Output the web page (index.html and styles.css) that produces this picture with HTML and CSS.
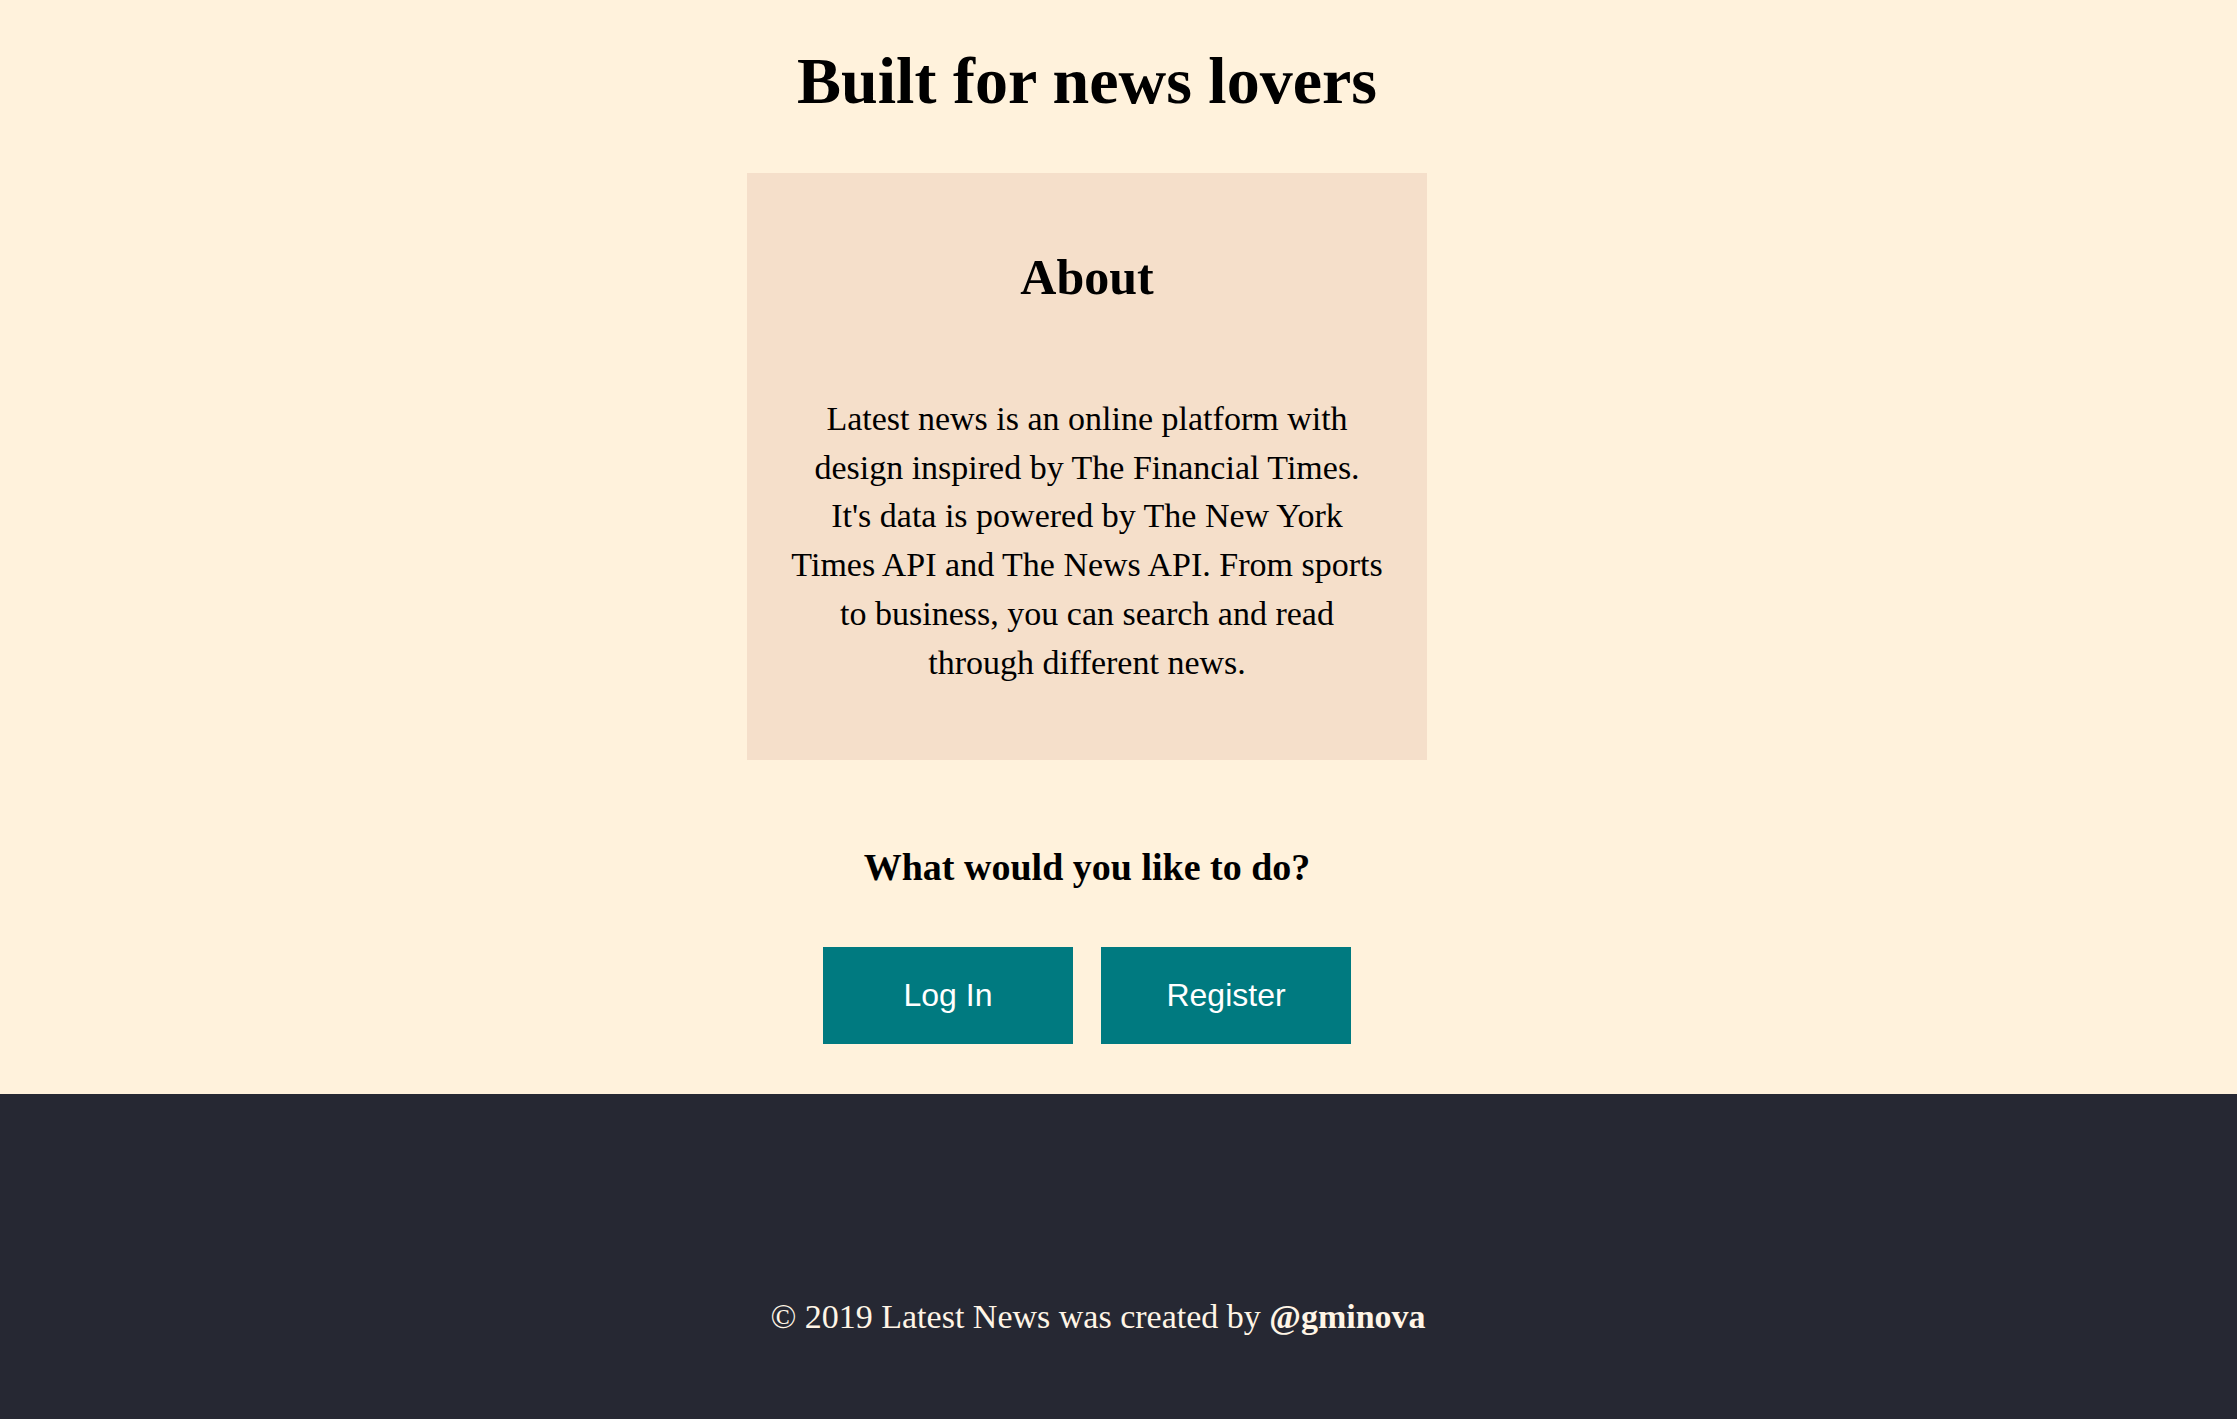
FILE: index.html
```html
<!DOCTYPE html>
<html lang="en">
<head>
<meta charset="utf-8">
<title>Latest News</title>
<link rel="stylesheet" href="styles.css">
</head>
<body>
<main class="hero">
  <h1 class="title">Built for news lovers</h1>
  <section class="about">
    <h2 class="about-title">About</h2>
    <p class="about-text">Latest news is an online platform with<br>design inspired by The Financial Times.<br>It's data is powered by The New York<br>Times API and The News API. From sports<br>to business, you can search and read<br>through different news.</p>
  </section>
  <h3 class="question">What would you like to do?</h3>
  <div class="actions">
    <a class="btn" href="#">Log In</a>
    <a class="btn" href="#">Register</a>
  </div>
</main>
<footer class="footer">
  <p class="footer-text">© 2019 Latest News was created by <strong class="handle">@gminova</strong></p>
</footer>
</body>
</html>
```
FILE: styles.css
```css
html, body {
  margin: 0;
  padding: 0;
}
body {
  background: #fff2dc;
  font-family: "Liberation Serif", "Times New Roman", serif;
  color: #000;
}
.hero {
  display: flex;
  flex-direction: column;
  align-items: center;
  padding: 41px 63px 50px 0;
}
.title {
  margin: 0;
  font-size: 66px;
  line-height: 80px;
  font-weight: 700;
}
.about {
  box-sizing: border-box;
  width: 680px;
  margin-top: 52px;
  padding: 74px 20px 73px;
  background: #f5dfca;
  text-align: center;
}
.about-title {
  margin: 0;
  font-size: 50px;
  line-height: 60px;
  font-weight: 700;
}
.about-text {
  margin: 88px 0 0;
  font-size: 34px;
  line-height: 48.7px;
}
.question {
  margin: 82px 0 0;
  font-size: 38px;
  line-height: 50px;
  font-weight: 700;
}
.actions {
  display: flex;
  gap: 28px;
  margin-top: 55px;
}
.btn {
  width: 250px;
  height: 97px;
  display: flex;
  align-items: center;
  justify-content: center;
  background: #007a80;
  color: #fff;
  text-decoration: none;
  font-family: "Liberation Sans", Arial, sans-serif;
  font-size: 32px;
}
.footer {
  box-sizing: border-box;
  background: #262833;
  min-height: 325px;
  padding-right: 41px;
  display: flex;
  align-items: flex-end;
  justify-content: center;
}
.footer-text {
  margin: 0 0 82px;
  color: #fff5e6;
  font-size: 34px;
  line-height: 40px;
}
.handle {
  font-weight: 700;
}
```
